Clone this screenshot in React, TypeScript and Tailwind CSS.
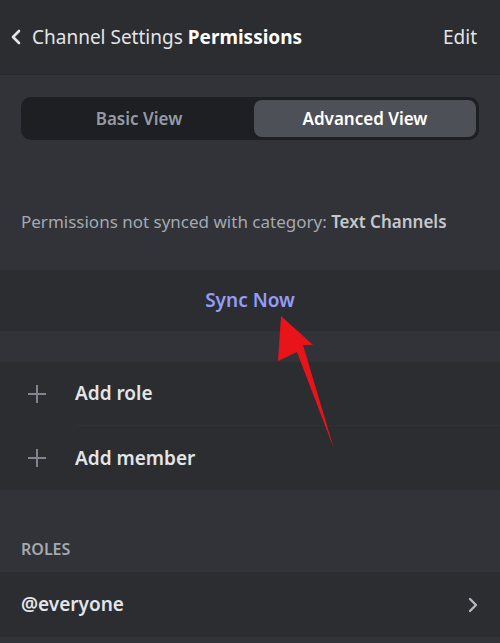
export default function App() {
  return (
    <main
      className="relative w-[500px] h-[643px] overflow-hidden bg-[#313338] text-[#dbdee1]"
      style={{ fontFamily: '"Noto Sans", "Open Sans", sans-serif' }}
    >
      {/* Header */}
      <header className="h-[75px] bg-[#2b2d31] flex items-center justify-between pl-[9px] pr-[23px] border-b border-[#27292d]">
        <div className="flex items-center">
          <svg width="14" height="18" viewBox="0 0 14 18" className="mr-[9px]">
            <path d="M10 3 L4 9 L10 15" fill="none" stroke="#e3e5e8" strokeWidth="2.6" strokeLinecap="round" strokeLinejoin="round" />
          </svg>
          <span className="text-[19px] text-[#e3e5e8]">Channel Settings</span>
          <span className="text-[19px] font-bold text-white ml-[5px]">Permissions</span>
        </div>
        <span className="text-[19px] text-[#e3e5e8]">Edit</span>
      </header>

      {/* Segmented control */}
      <div className="px-[21px] pt-[22px]">
        <div className="h-[43px] rounded-[10px] bg-[#1e1f22] p-[3px] flex">
          <div className="flex-1 flex items-center justify-center text-[17px] font-semibold text-[#949ba4]">
            Basic View
          </div>
          <div className="w-[222px] flex items-center justify-center rounded-[8px] bg-[#4e5058] text-[17px] font-semibold text-white">
            Advanced View
          </div>
        </div>
      </div>

      {/* Sync notice */}
      <p className="px-[21px] pt-[70px] pb-[36px] text-[17px] leading-[24px] text-[#a4a9b0] whitespace-nowrap">
        Permissions not synced with category:{" "}
        <span className="font-semibold text-[#c4c8cd]">Text Channels</span>
      </p>

      <div className="h-[61px] bg-[#2b2d31] flex items-center justify-center">
        <span className="text-[19px] font-semibold text-[#949cf7]">Sync Now</span>
      </div>

      {/* Add role / member */}
      <div className="mt-[31px] bg-[#2b2d31]">
        {["Add role", "Add member"].map((label, i) => (
          <div key={label} className="h-[64px] flex items-center">
            <svg width="20" height="20" viewBox="0 0 20 20" className="ml-[27px] mr-[28px]">
              <path d="M10 1 V19 M1 10 H19" stroke="#80848e" strokeWidth="2" />
            </svg>
            <div className={`flex-1 h-full flex items-center ${i === 0 ? "border-b border-[#2f3136]" : ""}`}>
              <span className="text-[19px] font-semibold text-[#e3e5e8]">{label}</span>
            </div>
          </div>
        ))}
      </div>

      {/* Roles */}
      <div className="h-[82px] px-[21px] flex items-end pb-[11px]">
        <span className="text-[16px] font-semibold text-[#a4a9b0]">ROLES</span>
      </div>
      <div className="h-[65px] bg-[#2b2d31] flex items-center justify-between pl-[21px] pr-[22px]">
        <span className="text-[19px] font-semibold text-[#e3e5e8]">@everyone</span>
        <svg width="10" height="16" viewBox="0 0 10 16">
          <path d="M2 2 L8 8 L2 14" fill="none" stroke="#b5bac1" strokeWidth="2.4" strokeLinecap="round" strokeLinejoin="round" />
        </svg>
      </div>

      {/* Annotation arrow */}
      <svg className="absolute left-0 top-0 pointer-events-none" width="500" height="643">
        <path d="M281 316 L313 345 L303 345 L334 449 L297 352 L278 361 Z" fill="#e8141a" />
      </svg>
    </main>
  );
}
